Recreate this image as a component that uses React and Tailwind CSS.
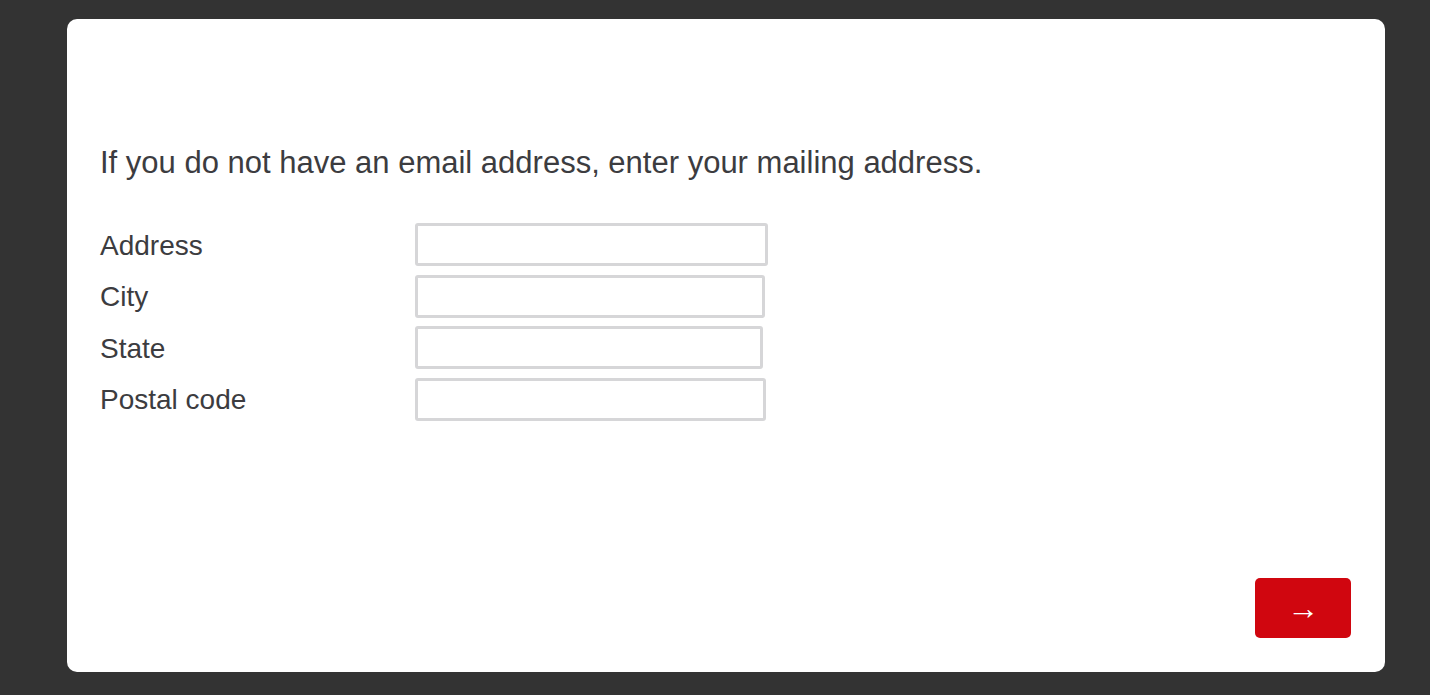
export default function App() {
  const fields = [
    { label: "Address", w: "w-[353px]" },
    { label: "City", w: "w-[350px]" },
    { label: "State", w: "w-[348px]" },
    { label: "Postal code", w: "w-[351px]" },
  ];

  return (
    <div className="min-h-[695px] bg-[#333333] pl-[67px] pr-[45px] pt-[19px] pb-[23px] font-['Liberation_Sans',Arial,sans-serif]">
      <div className="flex h-[653px] flex-col rounded-[10px] bg-white px-[33px] pb-[34px] pr-[34px]">
        <p className="mt-[126px] text-[31px] leading-[36px] text-[#3c3c40]">
          If you do not have an email address, enter your mailing address.
        </p>
        <form className="mt-[42px] flex flex-col gap-[8.67px]" onSubmit={(e) => e.preventDefault()}>
          {fields.map((f) => (
            <div key={f.label} className="flex items-center">
              <label className="w-[315px] pt-[2px] text-[28px] leading-[32px] text-[#3c3c40]">{f.label}</label>
              <input
                type="text"
                className={`${f.w} h-[43px] rounded-[3px] border-[3px] border-[#d6d6d8] bg-white px-2 text-[20px] outline-none`}
              />
            </div>
          ))}
        </form>
        <div className="flex-1" />
        <button
          type="button"
          className="self-end flex h-[60px] w-[96px] items-center justify-center rounded-[5px] bg-[#d0060f] text-[32px] leading-none text-white"
        >
          →
        </button>
      </div>
    </div>
  );
}
